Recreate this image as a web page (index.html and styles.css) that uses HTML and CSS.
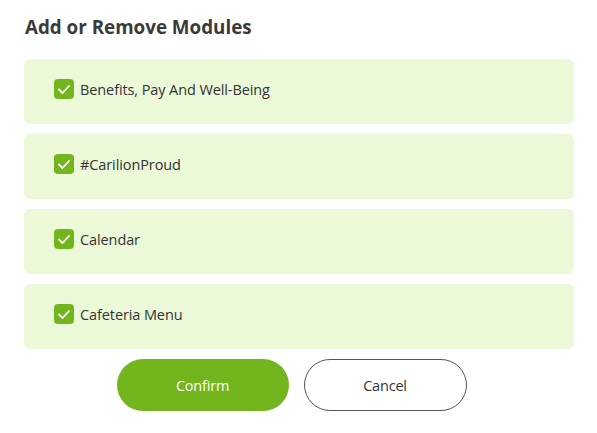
FILE: index.html
```html
<!DOCTYPE html>
<html>
<head>
<meta charset="utf-8">
<link rel="stylesheet" href="styles.css">
</head>
<body>
<div class="modal">
  <h2 class="title">Add or Remove Modules</h2>
  <div class="list">
    <label class="item"><span class="check"><svg viewBox="0 0 20 20" width="20" height="20"><polyline points="5,10.5 8.5,14 15,7" fill="none" stroke="#fff" stroke-width="1.8" stroke-linecap="round" stroke-linejoin="round"/></svg></span><span class="label">Benefits, Pay And Well-Being</span></label>
    <label class="item"><span class="check"><svg viewBox="0 0 20 20" width="20" height="20"><polyline points="5,10.5 8.5,14 15,7" fill="none" stroke="#fff" stroke-width="1.8" stroke-linecap="round" stroke-linejoin="round"/></svg></span><span class="label">#CarilionProud</span></label>
    <label class="item"><span class="check"><svg viewBox="0 0 20 20" width="20" height="20"><polyline points="5,10.5 8.5,14 15,7" fill="none" stroke="#fff" stroke-width="1.8" stroke-linecap="round" stroke-linejoin="round"/></svg></span><span class="label">Calendar</span></label>
    <label class="item"><span class="check"><svg viewBox="0 0 20 20" width="20" height="20"><polyline points="5,10.5 8.5,14 15,7" fill="none" stroke="#fff" stroke-width="1.8" stroke-linecap="round" stroke-linejoin="round"/></svg></span><span class="label">Cafeteria Menu</span></label>
  </div>
  <div class="actions">
    <button class="btn btn-primary">Confirm</button>
    <button class="btn btn-secondary">Cancel</button>
  </div>
</div>
</body>
</html>
```

FILE: styles.css
```css
html, body {
  margin: 0;
  padding: 0;
  background: #fff;
}
body {
  font-family: "Open Sans", "Noto Sans", sans-serif;
  color: #333;
}
.modal {
  padding: 14px 23px 0 24px;
}
.title {
  margin: 0 0 19px 1px;
  font-size: 18.8px;
  line-height: 26px;
  font-weight: 700;
  color: #3a3a3a;
  letter-spacing: 0;
}
.list {
  display: flex;
  flex-direction: column;
  gap: 10px;
}
.item {
  display: flex;
  align-items: center;
  height: 65px;
  box-sizing: border-box;
  padding: 0 30px 5px;
  background: #ebf9d8;
  border-radius: 6px;
}
.check {
  width: 20px;
  height: 20px;
  border-radius: 4px;
  background: #72b51d;
  display: flex;
  flex: none;
}
.label {
  margin-left: 6px;
  font-size: 14.5px;
  color: #333;
  letter-spacing: -0.1px;
}
.actions {
  display: flex;
  justify-content: center;
  gap: 15px;
  margin-top: 10px;
  padding-right: 15px;
}
.btn {
  height: 52px;
  border-radius: 26px;
  font-family: "Open Sans", "Noto Sans", sans-serif;
  font-size: 14.5px;
  letter-spacing: -0.2px;
  cursor: pointer;
}
.btn-primary {
  width: 172px;
  background: #72b51d;
  border: none;
  color: #fff;
}
.btn-secondary {
  width: 163px;
  background: #fff;
  border: 1px solid #555;
  color: #333;
}
```
